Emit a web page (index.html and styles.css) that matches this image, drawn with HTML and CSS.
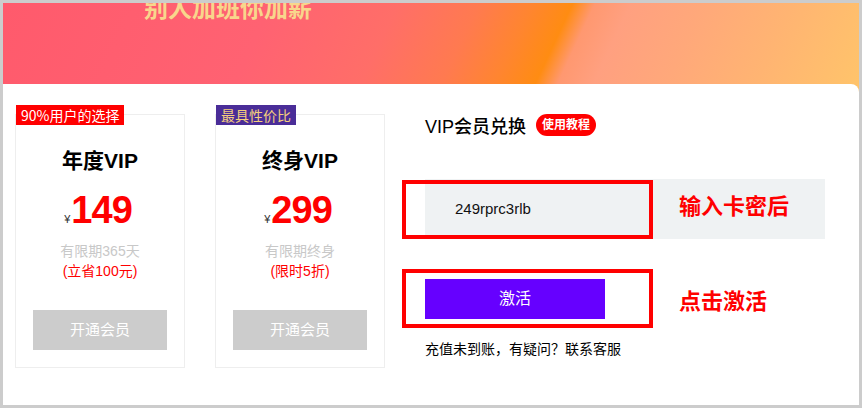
FILE: index.html
```html
<!DOCTYPE html>
<html lang="zh-CN">
<head>
<meta charset="utf-8">
<link rel="stylesheet" href="styles.css">
</head>
<body>
<div class="frame">
  <div class="banner">
    <div class="slogan">别人加班你加薪</div>
  </div>
  <div class="panel">
    <div class="cards">
      <div class="card">
        <span class="tag tag-red">90%用户的选择</span>
        <div class="card-title">年度VIP</div>
        <div class="price"><span class="yen">¥</span>149</div>
        <div class="term">有限期365天</div>
        <div class="save">(立省100元)</div>
        <div class="open-btn">开通会员</div>
      </div>
      <div class="card">
        <span class="tag tag-purple">最具性价比</span>
        <div class="card-title">终身VIP</div>
        <div class="price"><span class="yen">¥</span>299</div>
        <div class="term">有限期终身</div>
        <div class="save">(限时5折)</div>
        <div class="open-btn">开通会员</div>
      </div>
    </div>
    <div class="redeem">
      <div class="redeem-head">
        <span class="redeem-title">VIP会员兑换</span>
        <span class="guide">使用教程</span>
      </div>
      <div class="input-row">
        <div class="code-input">249rprc3rlb</div>
        <div class="mark mark-input"></div>
        <div class="note note-input">输入卡密后</div>
      </div>
      <div class="btn-row">
        <div class="activate">激活</div>
        <div class="mark mark-btn"></div>
        <div class="note note-btn">点击激活</div>
      </div>
      <div class="help">充值未到账，有疑问？联系客服</div>
    </div>
  </div>
</div>
</body>
</html>
```

FILE: styles.css
```css
* { box-sizing: border-box; margin: 0; padding: 0; }
html, body { width: 862px; height: 408px; overflow: hidden; }
body {
  font-family: "Liberation Sans", "Noto Sans CJK SC", sans-serif;
  background: #cccccc;
}
.frame {
  width: 862px;
  height: 408px;
  border: 3px solid #cccccc;
  background: #ffffff;
  display: flex;
  flex-direction: column;
  overflow: hidden;
}
.banner {
  height: 89px;
  flex: none;
  background: linear-gradient(115deg,
    #ff5a6c 0%, #ff6272 30%, #ff6e68 44%, #ff7a50 53%, #ff8530 59%, #ff8c12 63.5%,
    #ff9870 66%, #ffa080 70%, #ffa87a 78%, #ffb472 88%, #ffc46a 100%);
  padding-left: 141px;
}
.slogan {
  font-family: "Noto Sans CJK SC", sans-serif;
  font-size: 24px;
  font-weight: 700;
  line-height: 24px;
  color: #f8d68c;
  margin-top: -8px;
}
.panel {
  flex: 1;
  margin-top: -8px;
  background: #ffffff;
  border-radius: 0 8px 0 0;
  display: flex;
  padding: 30px 0 0 12px;
}
.cards {
  display: flex;
  gap: 30px;
}
.card {
  position: relative;
  width: 170px;
  height: 254px;
  border: 1px solid #eeeeee;
  display: flex;
  flex-direction: column;
  align-items: center;
}
.tag {
  position: absolute;
  top: -10px;
  left: 0;
  height: 20px;
  line-height: 20px;
  padding: 0 5px;
  font-size: 14px;
  font-family: "Noto Sans CJK SC", sans-serif;
  white-space: nowrap;
}
.tag-red { background: #ff0000; color: #ffffff; }
.tag-purple { background: #4a2d98; color: #f5cf7d; }
.card-title {
  margin-top: 33px;
  font-size: 21px;
  line-height: 26px;
  color: #000000;
  font-weight: 700;
}
.price {
  margin-top: 14px;
  font-size: 38px;
  line-height: 44px;
  color: #ff0000;
  font-weight: 700;
  margin-left: -4px;
  letter-spacing: -1px;
}
.yen {
  font-size: 11px;
  font-weight: 400;
  color: #333333;
  margin-right: 2px;
}
.term {
  font-size: 14px;
  line-height: 20px;
  color: #c8c8c8;
}
.save {
  font-size: 14px;
  line-height: 20px;
  color: #ff0000;
}
.open-btn {
  margin-top: 29px;
  width: 134px;
  height: 40px;
  line-height: 40px;
  text-align: center;
  background: #cccccc;
  color: #ffffff;
  font-size: 15px;
}
.redeem {
  margin-left: 40px;
  display: flex;
  flex-direction: column;
}
.redeem-head {
  display: flex;
  align-items: center;
  height: 22px;
  gap: 10px;
}
.redeem-title {
  font-size: 18px;
  color: #000000;
  font-weight: 500;
}
.guide {
  height: 22px;
  line-height: 22px;
  padding: 0 6px;
  border-radius: 11px;
  background: #ff0000;
  color: #ffffff;
  font-size: 12px;
  font-weight: 700;
}
.input-row {
  position: relative;
  margin-top: 43px;
  width: 400px;
  height: 60px;
}
.code-input {
  width: 400px;
  height: 60px;
  background: #eff2f3;
  padding-left: 30px;
  line-height: 60px;
  font-size: 15px;
  color: #111111;
}
.mark {
  position: absolute;
  left: -23px;
  width: 251px;
  border: 4px solid #ff0000;
}
.mark-input { top: 1px; height: 59px; }
.mark-btn { top: -10px; height: 59px; }
.note {
  position: absolute;
  left: 254px;
  font-family: "Noto Sans CJK SC", sans-serif;
  font-size: 22px;
  font-weight: 700;
  color: #ff0000;
  line-height: 30px;
}
.note-input { top: 10px; }
.note-btn { top: 5px; }
.btn-row {
  position: relative;
  margin-top: 40px;
  height: 40px;
}
.activate {
  width: 180px;
  height: 40px;
  line-height: 40px;
  text-align: center;
  background: #6600ff;
  color: #ffffff;
  font-size: 16px;
}
.help {
  margin-top: 20px;
  font-size: 14px;
  line-height: 20px;
  color: #000000;
}
```
